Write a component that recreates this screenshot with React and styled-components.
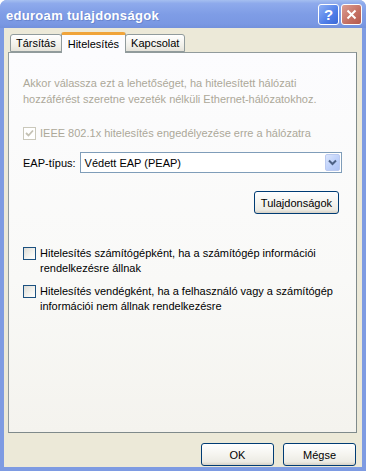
import styled, { createGlobalStyle } from "styled-components";

const GlobalStyle = createGlobalStyle`
  html, body {
    margin: 0;
    padding: 0;
    background: #ffffff;
  }
  body {
    font-family: "Liberation Sans", Arial, sans-serif;
    font-size: 11px;
  }
`;

const Window = styled.div`
  width: 366px;
  height: 471px;
  box-sizing: border-box;
  background: #7e9be2;
  border-radius: 7px 7px 0 0;
  display: flex;
  flex-direction: column;
  overflow: hidden;
`;

const TitleBar = styled.div`
  height: 28px;
  flex: none;
  display: flex;
  align-items: center;
  padding: 0 4px 0 6px;
  background: linear-gradient(#a5bff0 0%, #8eaaec 12%, #7f9de6 50%, #7a98e3 85%, #7391dc 100%);
`;

const Title = styled.div`
  flex: 1;
  color: #ffffff;
  font-family: "Liberation Sans", Arial, sans-serif;
  font-weight: bold;
  font-size: 13px;
  letter-spacing: 0.3px;
  text-shadow: 1px 1px 0 #6a86cf;
  margin-top: 2px;
`;

const TitleButton = styled.div`
  width: 19px;
  height: 19px;
  margin-left: 2px;
  margin-top: 1px;
  border: 1px solid #ffffff;
  border-radius: 3px;
  display: flex;
  align-items: center;
  justify-content: center;
  color: #ffffff;
  font-weight: bold;
  font-size: 15px;
  background: ${(p) =>
    p.$close
      ? "linear-gradient(135deg, #dc9d93, #c46f62 60%, #b55a4e)"
      : "linear-gradient(135deg, #8fb0f4, #4f7ee8 60%, #3b68d6)"};
`;

const Body = styled.div`
  flex: 1;
  margin: 0 4px 4px;
  background: #ece9d8;
  display: flex;
  flex-direction: column;
  padding: 5px 5px 0 4px;
`;

const TabStrip = styled.div`
  display: flex;
  align-items: flex-end;
  height: 19px;
  padding-left: 2px;
  position: relative;
  z-index: 1;
`;

const Tab = styled.div`
  box-sizing: border-box;
  height: ${(p) => (p.$active ? "21px" : "18px")};
  margin-bottom: ${(p) => (p.$active ? "-1px" : "0")};
  padding: ${(p) => (p.$active ? "3px 6px 0" : "2px 5px 0")};
  margin-left: ${(p) => (p.$active ? "-1px" : "0")};
  margin-right: ${(p) => (p.$active ? "-1px" : "0")};
  border: 1px solid #919b9c;
  border-bottom: ${(p) => (p.$active ? "none" : "1px solid #919b9c")};
  border-top: ${(p) => (p.$active ? "3px solid #f0a43a" : "1px solid #919b9c")};
  border-radius: 3px 3px 0 0;
  background: ${(p) => (p.$active ? "#fcfcfe" : "linear-gradient(#ffffff, #f0efe8 70%, #e5e3da)")};
  color: #000000;
  font-size: 11px;
  white-space: nowrap;
  position: relative;
  z-index: ${(p) => (p.$active ? 2 : 1)};
`;

const Panel = styled.div`
  height: 381px;
  box-sizing: border-box;
  border: 1px solid #919b9c;
  border-right-color: #7f8a8b;
  border-bottom-color: #7f8a8b;
  background: linear-gradient(#fcfcfe 0%, #f9f9f7 60%, #f4f3ee 100%);
  padding: 22px 14px 0 14px;
  display: flex;
  flex-direction: column;
`;

const Note = styled.p`
  margin: 0;
  color: #aca899;
  line-height: 16px;
`;

const CheckRow = styled.label`
  display: flex;
  align-items: flex-start;
  gap: 4px;
  margin-top: ${(p) => p.$top || 0}px;
  color: ${(p) => (p.$disabled ? "#aca899" : "#000000")};
  line-height: 15px;
`;

const Box = styled.span`
  flex: none;
  width: 11px;
  height: 11px;
  margin-top: 1px;
  border: 1px solid ${(p) => (p.$disabled ? "#cac8bb" : "#1c5180")};
  background: ${(p) => (p.$disabled ? "#ffffff" : "linear-gradient(135deg, #dcdbd5, #f4f4f0 60%, #ffffff)")};
  display: flex;
  align-items: center;
  justify-content: center;
`;

const EapRow = styled.div`
  display: flex;
  align-items: center;
  gap: 4px;
  margin-top: 11px;
`;

const Combo = styled.div`
  flex: 1;
  height: 21px;
  box-sizing: border-box;
  border: 1px solid #7f9db9;
  background: #ffffff;
  display: flex;
  align-items: center;
  padding: 1px 1px 1px 4px;
`;

const ComboText = styled.span`
  flex: 1;
`;

const ComboArrow = styled.span`
  width: 15px;
  height: 17px;
  box-sizing: border-box;
  border: 1px solid #bbcaf0;
  border-radius: 2px;
  background: linear-gradient(135deg, #dbe6fd, #bccffa 60%, #b0c4f4);
  display: flex;
  align-items: center;
  justify-content: center;
`;

const ButtonRow = styled.div`
  display: flex;
  justify-content: flex-end;
  gap: 9px;
  margin-top: ${(p) => p.$top || 0}px;
  padding-right: ${(p) => p.$right || 0}px;
`;

const Button = styled.button`
  height: 23px;
  min-width: ${(p) => p.$w || 75}px;
  box-sizing: border-box;
  border: 1px solid #003c74;
  border-radius: 3px;
  background: linear-gradient(#ffffff 0%, #f5f4ef 50%, #ecebe4 85%, #d6d0c5 100%);
  font-family: "Liberation Sans", Arial, sans-serif;
  font-size: 11px;
  color: #000000;
  padding: 0 6px;
`;

const Footer = styled.div`
  display: flex;
  justify-content: flex-end;
  gap: 9px;
  margin-top: 10px;
  margin-right: 1px;
`;

const Check = ({ color }) => (
  <svg width="9" height="9" viewBox="0 0 9 9">
    <path d="M1 4 L3.5 6.5 L8 1.5" fill="none" stroke={color} strokeWidth="1.8" />
  </svg>
);

const Chevron = () => (
  <svg width="9" height="7" viewBox="0 0 9 7">
    <path d="M1 1.5 L4.5 5 L8 1.5" fill="none" stroke="#4d6185" strokeWidth="2" />
  </svg>
);

export default function App() {
  return (
    <>
      <GlobalStyle />
      <Window>
        <TitleBar>
          <Title>eduroam tulajdonságok</Title>
          <TitleButton>?</TitleButton>
          <TitleButton $close>
            <svg width="11" height="11" viewBox="0 0 11 11">
              <path d="M1.5 1.5 L9.5 9.5 M9.5 1.5 L1.5 9.5" stroke="#ffffff" strokeWidth="2" />
            </svg>
          </TitleButton>
        </TitleBar>
        <Body>
          <TabStrip>
            <Tab>Társítás</Tab>
            <Tab $active>Hitelesítés</Tab>
            <Tab>Kapcsolat</Tab>
          </TabStrip>
          <Panel>
            <Note>
              Akkor válassza ezt a lehetőséget, ha hitelesített hálózati
              <br />
              hozzáférést szeretne vezeték nélküli Ethernet-hálózatokhoz.
            </Note>
            <CheckRow $disabled $top={19}>
              <Box $disabled>
                <Check color="#c4c1b4" />
              </Box>
              IEEE 802.1x hitelesítés engedélyezése erre a hálózatra
            </CheckRow>
            <EapRow>
              <span>EAP-típus:</span>
              <Combo>
                <ComboText>Védett EAP (PEAP)</ComboText>
                <ComboArrow>
                  <Chevron />
                </ComboArrow>
              </Combo>
            </EapRow>
            <ButtonRow $top={18} $right={3}>
              <Button $w={81}>Tulajdonságok</Button>
            </ButtonRow>
            <CheckRow $top={32}>
              <Box />
              <span>
                Hitelesítés számítógépként, ha a számítógép információi
                <br />
                rendelkezésre állnak
              </span>
            </CheckRow>
            <CheckRow $top={8}>
              <Box />
              <span>
                Hitelesítés vendégként, ha a felhasználó vagy a számítógép
                <br />
                információi nem állnak rendelkezésre
              </span>
            </CheckRow>
          </Panel>
          <Footer>
            <Button $w={73}>OK</Button>
            <Button $w={73}>Mégse</Button>
          </Footer>
        </Body>
      </Window>
    </>
  );
}
